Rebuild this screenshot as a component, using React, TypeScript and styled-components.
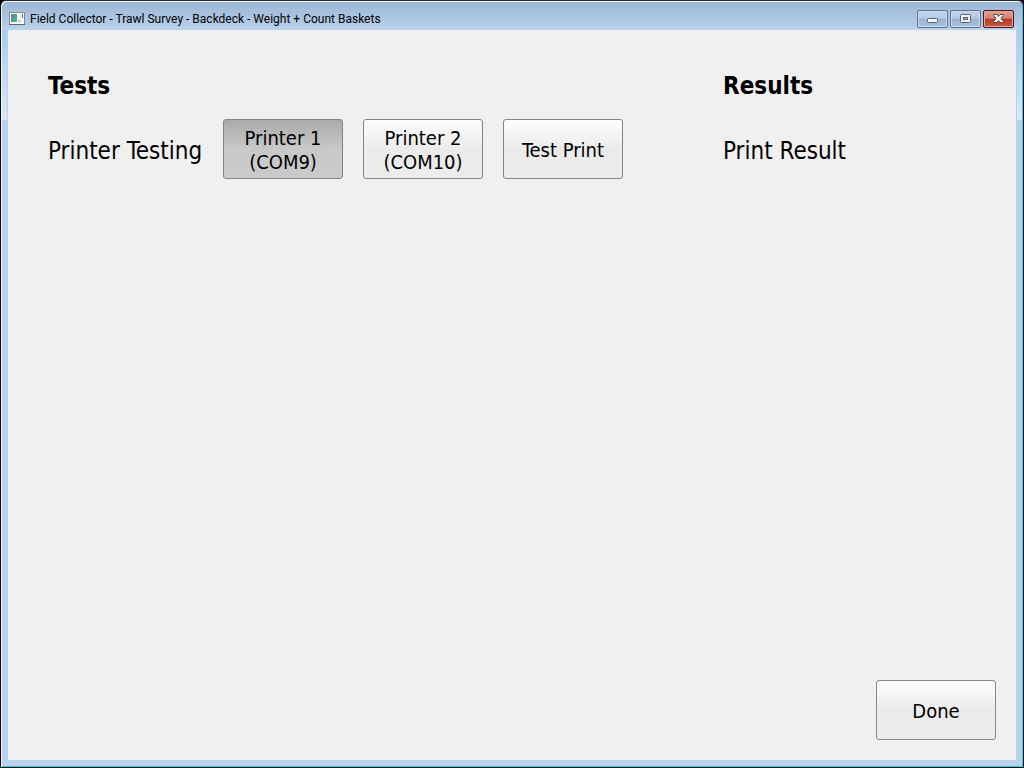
import React, { useState } from "react";
import styled, { createGlobalStyle, css } from "styled-components";

const GlobalStyle = createGlobalStyle`
  *, *::before, *::after { box-sizing: border-box; }
  body {
    margin: 0;
    background: #000;
    font-family: Tahoma, "DejaVu Sans Condensed", "Noto Sans", sans-serif;
    color: #000;
  }
`;

const WindowFrame = styled.div`
  display: flex;
  flex-direction: column;
  min-height: 100vh;
  padding: 0 7px 7px 7px;
  border: 1px solid #0b0b0f;
  border-top-color: #2b2730;
  border-radius: 6px 6px 0 0;
  background:
    linear-gradient(#9ab5d4, #b9d1ea) top / 100% 28px no-repeat,
    linear-gradient(#a9cbea, #dbe8f7) 1px 28px / 5px 91px no-repeat,
    linear-gradient(#a9cbea, #dbe8f7) calc(100% - 1px) 28px / 5px 91px no-repeat,
    #b9d1ea;
  box-shadow: inset 1px 1px 0 #f2f8fd, inset -1px -1px 0 #29cbe8;
`;

const TitleBar = styled.header`
  display: flex;
  align-items: center;
  gap: 5px;
  height: 29px;
  padding: 6px 2px 0 1px;
`;

const Title = styled.h1`
  flex: 1;
  margin: 0;
  font-size: 12px;
  line-height: 14px;
  font-weight: 400;
  font-family: "Segoe UI", Roboto, "Noto Sans", sans-serif;
`;

const WindowControls = styled.div`
  display: flex;
  gap: 2px;
`;

const ControlButton = styled.button<{ $close?: boolean }>`
  display: flex;
  width: 31px;
  height: 18px;
  padding: 0;
  border: 1px solid ${(p) => (p.$close ? "#4a1420" : "#5d728f")};
  border-radius: 2px;
  background: ${(p) =>
    p.$close
      ? "linear-gradient(#e0a094, #d58474 45%, #b83a22 50%, #c9593c)"
      : "linear-gradient(#c0d4ea, #b3cae3 45%, #98b4d2 50%, #a9c3de)"};
  box-shadow: inset 0 0 0 1px ${(p) => (p.$close ? "#e5a79b" : "#cbdcee")};
`;

const Content = styled.main`
  flex: 1;
  display: flex;
  flex-direction: column;
  justify-content: space-between;
  gap: 40px;
  padding: 41px 20px 20px 40px;
  background: #f0f0f0;
`;

const Sections = styled.div`
  display: grid;
  grid-template-columns: 1fr 273px;
`;

const Heading = styled.h2`
  margin: 0 0 18px;
  font-size: 24px;
  line-height: 30px;
  font-weight: 700;
`;

const Row = styled.div`
  display: flex;
  align-items: center;
  gap: 20px;
  min-height: 60px;
`;

const Label = styled.span`
  min-width: 155px;
  padding-top: 4px;
  font-size: 24px;
  line-height: 30px;
  white-space: nowrap;
`;

const PushButton = styled.button<{ $pressed?: boolean }>`
  width: 120px;
  height: 60px;
  padding: 2px 0 0;
  border: 1px solid #858585;
  border-radius: 3px;
  background: linear-gradient(#fefefe, #ebebeb 50%, #ececec);
  color: inherit;
  font-family: inherit;
  font-size: 20px;
  line-height: 24px;
  white-space: pre-line;
  ${(p) =>
    p.$pressed &&
    css`
      background: linear-gradient(#aaaaaa, #c9c9c9 50%, #cacaca);
    `}
`;

const Footer = styled.footer`
  display: flex;
  justify-content: flex-end;
`;

const AppIcon = () => (
  <svg width="16" height="14" viewBox="0 0 16 14" aria-hidden="true">
    <defs>
      <linearGradient id="screen" x1="0" y1="0" x2="1" y2="1">
        <stop offset="0" stopColor="#4d7fa6" />
        <stop offset="1" stopColor="#55b87c" />
      </linearGradient>
    </defs>
    <rect x="0.5" y="0.5" width="15" height="12" fill="#fafafa" stroke="#858b92" />
    <path d="M0 12.500h16" stroke="#666" />
    <rect x="2" y="2" width="6" height="8" fill="url(#screen)" />
    <rect x="9" y="2" width="3" height="6" fill="#f0f0f0" />
    <rect x="13" y="2" width="1" height="4" fill="#3b5fa8" />
    <rect x="9" y="8" width="3" height="2" fill="#c8c8c8" />
  </svg>
);

const MinimizeIcon = () => (
  <svg width="29" height="16" viewBox="0 0 29 16" aria-hidden="true">
    <rect x="9.500" y="7.500" width="10" height="4" rx="1" fill="#f4f4f4" stroke="#5a6475" />
  </svg>
);

const RestoreIcon = () => (
  <svg width="29" height="16" viewBox="0 0 29 16" aria-hidden="true">
    <rect x="9.500" y="3.500" width="10" height="8" rx="1" fill="#f4f4f4" stroke="#5a6475" />
    <rect x="12.500" y="6.500" width="4" height="2" fill="#9db7d4" stroke="#5a6475" />
  </svg>
);

const CloseIcon = () => (
  <svg width="29" height="16" viewBox="0 0 29 16" aria-hidden="true">
    <path
      d="M9.500 3.500h3.500l1.500 2 1.500-2h3.500v1l-2.500 3 2.500 3v1h-3.500l-1.500-2-1.500 2h-3.500v-1l2.500-3-2.500-3z"
      fill="#f6f6f6"
      stroke="#58444c"
    />
  </svg>
);

const printers = ["Printer 1\n(COM9)", "Printer 2\n(COM10)"];

export default function App() {
  const [selected, setSelected] = useState(0);

  return (
    <>
      <GlobalStyle />
      <WindowFrame>
        <TitleBar>
          <AppIcon />
          <Title>Field Collector - Trawl Survey - Backdeck - Weight + Count Baskets</Title>
          <WindowControls>
            <ControlButton aria-label="Minimize"><MinimizeIcon /></ControlButton>
            <ControlButton aria-label="Restore"><RestoreIcon /></ControlButton>
            <ControlButton aria-label="Close" $close><CloseIcon /></ControlButton>
          </WindowControls>
        </TitleBar>
        <Content>
          <Sections>
            <section>
              <Heading>Tests</Heading>
              <Row>
                <Label>Printer Testing</Label>
                {printers.map((name, i) => (
                  <PushButton
                    key={name}
                    $pressed={selected === i}
                    aria-pressed={selected === i}
                    onClick={() => setSelected(i)}
                  >
                    {name}
                  </PushButton>
                ))}
                <PushButton>Test Print</PushButton>
              </Row>
            </section>
            <section>
              <Heading>Results</Heading>
              <Row>
                <Label>Print Result</Label>
              </Row>
            </section>
          </Sections>
          <Footer>
            <PushButton>Done</PushButton>
          </Footer>
        </Content>
      </WindowFrame>
    </>
  );
}
